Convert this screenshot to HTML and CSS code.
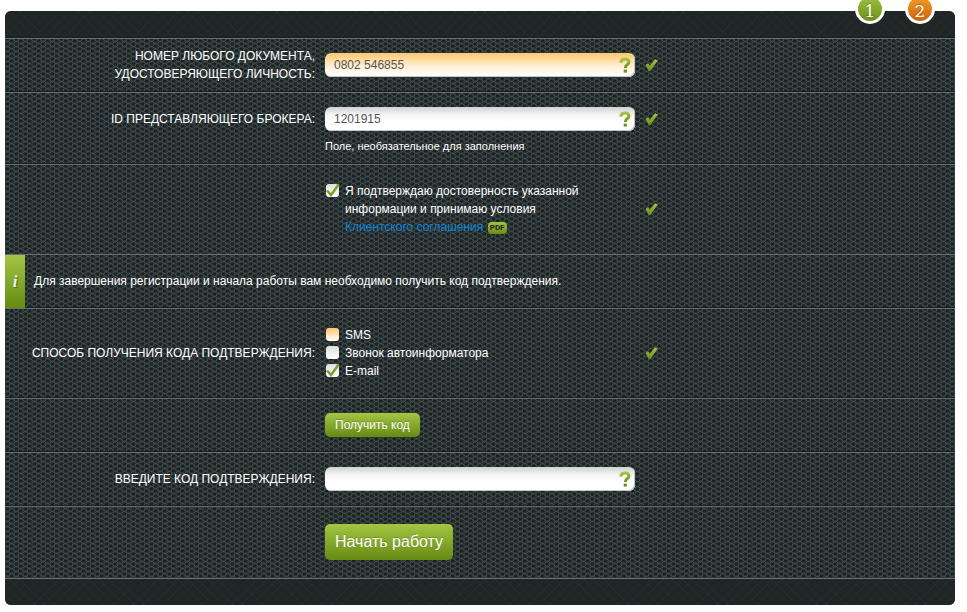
FILE: index.html
```
<!DOCTYPE html>
<html lang="ru">
  <head>
    <meta charset="UTF-8" />
    <meta name="viewport" content="width=device-width, initial-scale=1.0" />
    <title>Регистрация</title>
    <link rel="stylesheet" href="styles.css">
  </head>
  <body>
    <svg class="defs" width="0" height="0">
      <linearGradient id="green" x1="0" y1="0" x2="0" y2="1">
        <stop offset="0" stop-color="#a3c644" />
        <stop offset="1" stop-color="#6a8c14" />
      </linearGradient>
      <symbol id="tick" viewBox="0 0 13 13">
        <path d="M0.5 6 L3 4.2 L4.8 6.8 L10 0.3 L12.8 1.6 L5.2 12.3 H3.8 Z" fill="url(#green)" />
      </symbol>
      <symbol id="help" viewBox="0 0 12 16">
        <path d="M2 5.4 C2 3 3.6 2 6 2 C8.4 2 10 3 10 5 C10 7.8 6.3 7.4 6.3 11" fill="none" stroke="url(#green)" stroke-width="3" />
        <path d="M4.7 12.6 h3.2 v3 h-3.2 z" fill="#6f9119" />
      </symbol>
    </svg>
    <form class="panel">
      <ol class="steps">
        <li class="step">1</li>
        <li class="step current">2</li>
      </ol>
      <div class="head"></div>
      <div class="row">
        <label class="name" for="document">Номер любого документа, удостоверяющего личность:</label>
        <div class="field">
          <input class="text hot" type="text" id="document" value="0802 546855" />
          <svg class="help"><use href="#help" /></svg>
        </div>
        <svg class="tick"><use href="#tick" /></svg>
      </div>
      <div class="row noted">
        <label class="name" for="broker">ID представляющего брокера:</label>
        <div class="field">
          <input class="text" type="text" id="broker" value="1201915" />
          <svg class="help"><use href="#help" /></svg>
        </div>
        <svg class="tick"><use href="#tick" /></svg>
        <p class="note">Поле, необязательное для заполнения</p>
      </div>
      <div class="row tall">
        <div class="choices">
          <label class="choice">
            <input type="checkbox" checked />
            <span>Я подтверждаю достоверность указанной информации и принимаю условия <a href="#agreement">Клиентского соглашения</a> <span class="pdf">PDF</span></span>
          </label>
        </div>
        <svg class="tick"><use href="#tick" /></svg>
      </div>
      <div class="info">
        <span class="mark">i</span>
        <p>Для завершения регистрации и начала работы вам необходимо получить код подтверждения.</p>
      </div>
      <div class="row tall" role="group" aria-labelledby="method">
        <span class="name" id="method">Способ получения кода подтверждения:</span>
        <div class="choices">
          <label class="choice"><input class="hot" type="checkbox" /><span>SMS</span></label>
          <label class="choice"><input type="checkbox" /><span>Звонок автоинформатора</span></label>
          <label class="choice"><input type="checkbox" checked /><span>E-mail</span></label>
        </div>
        <svg class="tick"><use href="#tick" /></svg>
      </div>
      <div class="row">
        <button class="button" type="button">Получить код</button>
      </div>
      <div class="row">
        <label class="name" for="code">Введите код подтверждения:</label>
        <div class="field">
          <input class="text" type="text" id="code" />
          <svg class="help"><use href="#help" /></svg>
        </div>
      </div>
      <div class="row tall">
        <button class="button big" type="submit">Начать работу</button>
      </div>
      <div class="foot"></div>
    </form>
  </body>
</html>
```
FILE: styles.css
```
* {
  box-sizing: border-box;
}
body {
  margin: 0;
  padding: 11px 12px 7px 5px;
  background: #fff;
  color: #fff;
  font: 12px/18px "Liberation Sans", Arial, sans-serif;
}
p,
ol {
  margin: 0;
  padding: 0;
}
.defs {
  position: absolute;
}
.panel {
  position: relative;
  border-radius: 6px;
  background-color: #1d2424;
  background-image: url("data:image/svg+xml,%3Csvg xmlns='http://www.w3.org/2000/svg' width='9' height='5' shape-rendering='crispEdges'%3E%3Cpath fill='%232a3333' d='M0 0h9v5H0z'/%3E%3Cpath fill='%23414a4a' d='M1 0h3v1H1zM0 1h1v1H0zM4 1h1v1H4zM0 4h1v1H0zM4 4h1v1H4zM5 2h3v1H5zM8 3h1v1H8zM4 3h1v1H4z'/%3E%3Cpath fill='%231a2222' d='M1 2h3v2H1zM5 0h3v1H5zM5 4h3v1H5z'/%3E%3C/svg%3E");
}
.head,
.foot {
  background-color: #202525;
  background-image:
    repeating-linear-gradient(45deg, rgba(255, 255, 255, 0.02) 0 1px, transparent 1px 7px),
    repeating-linear-gradient(-45deg, rgba(255, 255, 255, 0.02) 0 1px, transparent 1px 7px);
}
.head {
  height: 27px;
  border-radius: 6px 6px 0 0;
}
.foot {
  height: 27px;
  border-top: 1px solid #6b6f6f;
  border-radius: 0 0 6px 6px;
}
.steps {
  position: absolute;
  z-index: 1;
  top: -17px;
  right: 20px;
  display: flex;
  gap: 20px;
  list-style: none;
}
.step {
  display: grid;
  place-items: center;
  width: 30px;
  height: 30px;
  padding-top: 3px;
  border: 3px solid #fff;
  border-radius: 50%;
  background: linear-gradient(#a3c644, #668a12) border-box;
  font: 17px/18px "DejaVu Serif", Georgia, serif;
  text-shadow: 0 -1px 1px rgba(0, 0, 0, 0.3);
}
.step.current {
  background-image: linear-gradient(#f9a12c, #c65f05);
}
.row {
  display: grid;
  grid-template-columns: 310px 310px 1fr;
  column-gap: 10px;
  row-gap: 6px;
  align-items: center;
  min-height: 54px;
  padding: 14px 0 15px;
  border-top: 1px solid #6b6f6f;
  box-shadow: 0 -1px #1a1e1e;
}
.row:has(.text) {
  grid-template-rows: 24px;
}
.row.noted {
  padding-bottom: 9px;
}
.row.tall {
  padding: 17px 0 18px;
}
.name {
  justify-self: end;
  max-width: 220px;
  text-align: right;
  text-transform: uppercase;
}
span.name {
  max-width: none;
}
.field,
.note,
.choices,
.button {
  grid-column: 2;
}
.field {
  position: relative;
}
.text {
  display: block;
  width: 100%;
  height: 24px;
  padding: 0 30px 0 9px;
  border: 0;
  border-radius: 6px;
  background: linear-gradient(#d2d2d2, #f6f6f6 35%, #fff 65%);
  box-shadow: inset -1px -1px #c4c6c6;
  color: #555;
  font: inherit;
}
.text.hot {
  background: linear-gradient(#ffc76c, #fff2dd 60%, #fff);
}
.help {
  position: absolute;
  top: 4px;
  right: 4px;
  width: 12px;
  height: 16px;
}
.tick {
  width: 13px;
  height: 13px;
}
.note {
  font-size: 11px;
}
.choices {
  display: grid;
}
.choice {
  display: flex;
  gap: 5px;
  max-width: 280px;
}
.choice input {
  appearance: none;
  flex: none;
  width: 15px;
  height: 15px;
  margin: 1px 0 0;
  border: 1px solid transparent;
  background: linear-gradient(#dedede, #fff) padding-box;
  border-radius: 4px;
}
.choice input.hot {
  background-image: linear-gradient(#ffc76c, #fff);
}
.choice input:checked {
  background:
    url("data:image/svg+xml,%3Csvg xmlns='http://www.w3.org/2000/svg' viewBox='0 0 15 15'%3E%3Cpath d='M2 7.5l4 4.5L14 1' fill='none' stroke='%237d9f25' stroke-width='2.4'/%3E%3C/svg%3E") border-box,
    linear-gradient(#dedede, #fff) padding-box;
}
a {
  color: #0f84d2;
  text-decoration: none;
}
.pdf {
  display: inline-block;
  width: 19px;
  height: 12px;
  margin-left: 1px;
  border-radius: 4px;
  background: linear-gradient(#a3c644, #6a8c14);
  color: #1d2424;
  font: bold 8px/12px Roboto, sans-serif;
  text-align: center;
  vertical-align: 1px;
}
.info {
  display: flex;
  align-items: center;
  gap: 9px;
  min-height: 54px;
  border-top: 1px solid #6b6f6f;
}
.info p {
  padding-bottom: 2px;
}
.mark {
  display: grid;
  place-items: center;
  align-self: stretch;
  width: 20px;
  background: linear-gradient(#a3c644, #668a12);
  color: #eee;
  font: italic bold 17px "Liberation Serif", serif;
  text-shadow: 1px 1px 1px rgba(0, 0, 0, 0.4);
}
.button {
  justify-self: start;
  height: 24px;
  padding: 0 10px;
  border: 0;
  border-radius: 5px;
  background: linear-gradient(#a3c644, #668a12);
  color: #fff;
  font: inherit;
  text-shadow: 0 -1px rgba(0, 0, 0, 0.2);
}
.button.big {
  height: 36px;
  font-size: 16px;
}
```
